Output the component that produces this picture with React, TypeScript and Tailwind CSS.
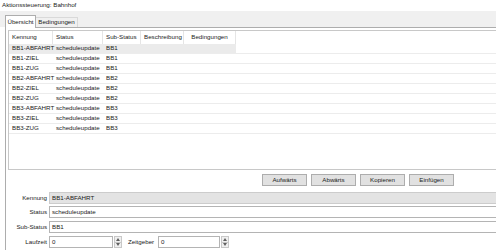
import React from 'react';

const rows = [
    ['BB1-ABFAHRT', 'scheduleupdate', 'BB1'],
    ['BB1-ZIEL', 'scheduleupdate', 'BB1'],
    ['BB1-ZUG', 'scheduleupdate', 'BB1'],
    ['BB2-ABFAHRT', 'scheduleupdate', 'BB2'],
    ['BB2-ZIEL', 'scheduleupdate', 'BB2'],
    ['BB2-ZUG', 'scheduleupdate', 'BB2'],
    ['BB3-ABFAHRT', 'scheduleupdate', 'BB3'],
    ['BB3-ZIEL', 'scheduleupdate', 'BB3'],
    ['BB3-ZUG', 'scheduleupdate', 'BB3'],
];

function Spinner() {
    return (
        <div className="w-[8px] h-[12px] flex flex-col border border-[#c8c8c8] bg-[#f0f0f0]">
            <div className="flex-1 flex items-center justify-center border-b border-[#c8c8c8]">
                <svg width="4" height="3" viewBox="0 0 4 3"><path d="M0 3 L2 0 L4 3 Z" fill="#606060" /></svg>
            </div>
            <div className="flex-1 flex items-center justify-center">
                <svg width="4" height="3" viewBox="0 0 4 3"><path d="M0 0 L2 3 L4 0 Z" fill="#606060" /></svg>
            </div>
        </div>
    );
}

export default function App() {
    return (
        <div className="w-[496px] h-[250px] bg-white overflow-hidden text-[6.2px] text-[#1a1a1a] font-['Liberation_Sans',Arial,sans-serif] leading-none whitespace-nowrap">
            <div className="h-[11px] pl-[2px] flex items-center">Aktionssteuerung: Bahnhof</div>

            {/* Tabs */}
            <div className="h-[16px] bg-[#f0f0f0] flex items-end pl-[5px]">
                <div className="relative z-10 -mb-px h-[13px] w-[31px] bg-white border border-b-0 border-[#adadad] flex items-center justify-center">
                    Übersicht
                </div>
                <div className="h-[10px] w-[42px] bg-[#f0f0f0] border border-b-0 border-l-0 border-[#d9d9d9] flex items-center justify-center">
                    Bedingungen
                </div>
            </div>

            <div className="ml-[5px] border-t border-l border-[#adadad] h-[223px] pl-[2px] pt-[2px]">
                {/* Table */}
                <div className="h-[140px] border border-r-0 border-[#c8c8c8]">
                    <div className="flex h-[13px]">
                        <div className="w-[44px] pl-[3px] flex items-center border-r border-[#e5e5e5]">Kennung</div>
                        <div className="w-[50px] pl-[3px] flex items-center border-r border-[#e5e5e5]">Status</div>
                        <div className="w-[38px] pl-[3px] flex items-center border-r border-[#e5e5e5]">Sub-Status</div>
                        <div className="w-[43px] pl-[3px] flex items-center border-r border-[#e5e5e5]">Beschreibung</div>
                        <div className="w-[52px] flex items-center justify-center border-r border-[#e5e5e5]">Bedingungen</div>
                    </div>
                    {rows.map((r, i) => (
                        <div key={i} className="h-[10px] border-b border-[#ececec]">
                            <div className={`w-[227px] h-full flex items-center ${i === 0 ? 'bg-[#ebebeb]' : ''}`}>
                                <div className="w-[44px] pl-[3px]">{r[0]}</div>
                                <div className="w-[50px] pl-[3px]">{r[1]}</div>
                                <div className="w-[38px] pl-[3px]">{r[2]}</div>
                            </div>
                        </div>
                    ))}
                </div>

                {/* Buttons */}
                <div className="mt-[4px] flex gap-[4px] pl-[254px]">
                    {['Aufwärts', 'Abwärts', 'Kopieren', 'Einfügen'].map((b) => (
                        <div key={b} className="w-[45px] h-[12px] bg-[#e1e1e1] border border-[#adadad] flex items-center justify-center">
                            {b}
                        </div>
                    ))}
                </div>

                {/* Form */}
                <div className="mt-[6px] -ml-[2px] flex flex-col">
                    <div className="flex items-center h-[12px]">
                        <div className="w-[41px] text-right">Kennung</div>
                        <div className="ml-[2px] flex-1 h-[12px] bg-[#e3e3e3] border border-r-0 border-[#cccccc] flex items-center pl-[2px]">BB1-ABFAHRT</div>
                    </div>
                    <div className="flex items-center h-[12px] mt-[2px]">
                        <div className="w-[41px] text-right">Status</div>
                        <div className="ml-[2px] flex-1 h-[12px] bg-white border border-r-0 border-[#b4b4b4] flex items-center pl-[2px]">scheduleupdate</div>
                    </div>
                    <div className="flex items-center h-[12px] mt-[3px]">
                        <div className="w-[41px] text-right">Sub-Status</div>
                        <div className="ml-[2px] flex-1 h-[12px] bg-white border border-r-0 border-[#b4b4b4] flex items-center pl-[2px]">BB1</div>
                    </div>
                    <div className="flex items-center h-[12px] mt-[3px]">
                        <div className="w-[41px] text-right">Laufzeit</div>
                        <div className="ml-[2px] w-[64px] h-[12px] bg-white border border-[#b4b4b4] flex items-center pl-[2px]">0</div>
                        <div className="ml-[1px]"><Spinner /></div>
                        <div className="ml-[6px] w-[30px]">Zeitgeber</div>
                        <div className="w-[62px] h-[12px] bg-white border border-[#b4b4b4] flex items-center pl-[2px]">0</div>
                        <div className="ml-[1px]"><Spinner /></div>
                    </div>
                </div>
            </div>
        </div>
    );
}
